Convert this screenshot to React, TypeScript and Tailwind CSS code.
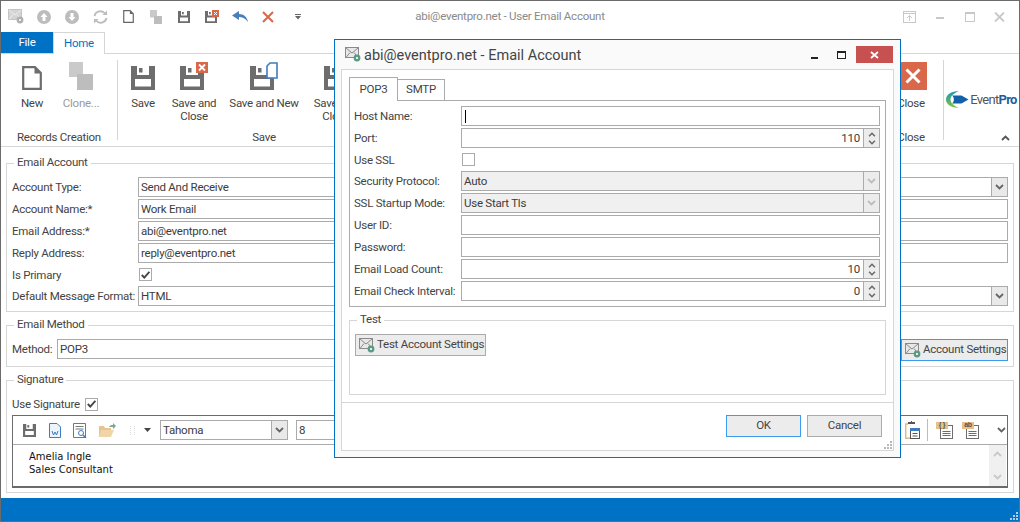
import type { ReactNode } from "react";

const labelCls = "text-[#444] whitespace-nowrap pt-[2px]";

function Disk({ size = 24, color = "#6d6d6d" }: { size?: number; color?: string }) {
	return (
		<svg width={size} height={size} viewBox="0 0 24 24" className="shrink-0">
			<path fillRule="evenodd" fill={color} d="M0 0H24V24H0ZM6 0V9H18V0ZM4 13V20.500H20V13Z" />
			<rect x="8" y="2" width="3.500" height="4.500" fill={color} />
		</svg>
	);
}

function PageIcon({ w = 20, h = 24, color = "#6d6d6d" }: { w?: number; h?: number; color?: string }) {
	return (
		<svg width={w} height={h} viewBox="0 0 20 24" className="shrink-0">
			<path d="M1.200 1.200H13L18.800 7V22.800H1.200Z" fill="white" stroke={color} strokeWidth="2.200" />
			<path d="M12.500 1.200V7.500H18.800" fill={color} />
		</svg>
	);
}

function CloneIcon({ w = 24, h = 28, color = "#bdbdbd" }: { w?: number; h?: number; color?: string }) {
	return (
		<svg width={w} height={h} viewBox="0 0 24 28" className="shrink-0">
			<rect x="0" y="0" width="14" height="15" fill={color} opacity="0.8" />
			<rect x="8" y="12" width="16" height="16" fill={color} />
		</svg>
	);
}

function MailGear({ faded = false }: { faded?: boolean }) {
	const line = faded ? "#c4c4c4" : "#8a8a8a";
	return (
		<svg width="16" height="15" viewBox="0 0 16 15" className="shrink-0">
			<rect x="0.500" y="0.500" width="13" height="10" fill={faded ? "#d4d4d4" : "#e8e8e8"} stroke={line} />
			<path d="M1 1L7 6L13 1M1 10.500L5 5.500M13 10.500L9 5.500" fill="none" stroke={faded ? "#eeeeee" : line} />
			<circle cx="12" cy="11" r="3.400" fill={faded ? "#b0b0b0" : "#5c9a86"} />
			<circle cx="12" cy="11" r="1.100" fill="white" />
		</svg>
	);
}

function Chevron({ up = false, color = "#666", w = 9, h = 6 }: { up?: boolean; color?: string; w?: number; h?: number }) {
	return (
		<svg width={w} height={h} viewBox="0 0 9 6">
			<path d={up ? "M1 5L4.500 1.500L8 5" : "M1 1L4.500 4.500L8 1"} fill="none" stroke={color} strokeWidth="1.800" />
		</svg>
	);
}

function CircleArrow({ down = false }: { down?: boolean }) {
	return (
		<svg width="14" height="14" viewBox="0 0 14 14" className="shrink-0">
			<circle cx="7" cy="7" r="7" fill="#bdbdbd" />
			<path d={down ? "M5.500 3H8.500V7H10.500L7 11L3.500 7H5.500Z" : "M5.500 11H8.500V7H10.500L7 3L3.500 7H5.500Z"} fill="white" />
		</svg>
	);
}

function Refresh() {
	return (
		<svg width="15" height="14" viewBox="0 0 15 14" className="shrink-0">
			<path d="M1.500 6A6 6 0 0 1 12 3.500M13.500 8A6 6 0 0 1 3 10.500" fill="none" stroke="#bdbdbd" strokeWidth="1.800" />
			<path d="M14 0.500V5H9.500ZM1 13.500V9H5.500Z" fill="#bdbdbd" />
		</svg>
	);
}

function RedBadge() {
	return (
		<svg width="12" height="11" viewBox="0 0 12 11" className="absolute right-0 top-0">
			<rect width="12" height="11" fill="#d9674a" />
			<path d="M3 2.500L9 8.500M9 2.500L3 8.500" stroke="white" strokeWidth="1.800" />
		</svg>
	);
}

function Combo({ text, disabled = false, className = "" }: { text: string; disabled?: boolean; className?: string }) {
	return (
		<div className={`flex h-[20px] items-stretch border border-[#ababab] ${disabled ? "bg-[#f0f0f0]" : "bg-white"} ${className}`}>
			<div className="flex flex-1 items-center overflow-hidden whitespace-nowrap pl-[2px] pt-[2px] text-[#3c3c3c]">{text}</div>
			<div className={`flex w-[16px] shrink-0 items-center justify-center border-l border-[#ababab] ${disabled ? "bg-[#ececec]" : "bg-[#e9e9e9]"}`}>
				<Chevron color={disabled ? "#bdbdbd" : "#666"} />
			</div>
		</div>
	);
}

function Input({ text = "", caret = false, className = "" }: { text?: string; caret?: boolean; className?: string }) {
	return (
		<div className={`flex h-[20px] items-center overflow-hidden whitespace-nowrap border border-[#ababab] bg-white pl-[2px] pt-[2px] text-[#3c3c3c] ${className}`}>
			{caret && <div className="ml-[1px] mb-[2px] h-[13px] w-[1px] bg-black" />}
			{text}
		</div>
	);
}

function Spin({ value }: { value: string }) {
	return (
		<div className="flex h-[20px] flex-1 items-stretch border border-[#ababab] bg-white">
			<div className="flex flex-1 items-center justify-end pr-[3px] pt-[2px] text-[#3c3c3c]">{value}</div>
			<div className="flex w-[16px] flex-col items-center justify-center gap-[3px] border-l border-[#ababab] bg-[#ececec]">
				<Chevron up w={8} h={5} />
				<Chevron w={8} h={5} />
			</div>
		</div>
	);
}

function Check({ on = false }: { on?: boolean }) {
	return (
		<div className="flex h-[13px] w-[13px] shrink-0 items-center justify-center border border-[#ababab] bg-white">
			{on && (
				<svg width="9" height="8" viewBox="0 0 9 8">
					<path d="M0.800 4L3.300 6.600L8.400 0.800" fill="none" stroke="#444" strokeWidth="1.900" />
				</svg>
			)}
		</div>
	);
}

function Row({ label, labelWidth, children }: { label: string; labelWidth: string; children: ReactNode }) {
	return (
		<div className="mb-[2px] flex h-[20px] items-center">
			<div className={`${labelWidth} ${labelCls} shrink-0`}>{label}</div>
			{children}
		</div>
	);
}

function Group({ title, className = "", children }: { title: string; className?: string; children: ReactNode }) {
	return (
		<fieldset className={`border border-[#d6d6d6] ${className}`}>
			<legend className="ml-[2px] px-[3px] pb-[2px] leading-[12px] text-[#444]">{title}</legend>
			{children}
		</fieldset>
	);
}

function RibbonBtn({ w, icon, lines, muted = false }: { w: string; icon: ReactNode; lines: string[]; muted?: boolean }) {
	return (
		<div className={`${w} flex shrink-0 flex-col items-center`}>
			<div className="flex h-[31px] items-end">{icon}</div>
			<div className={`mt-[7px] text-center leading-[13px] ${muted ? "text-[#9a9a9a]" : "text-[#444]"}`}>
				{lines.map((l) => (
					<div key={l} className="whitespace-nowrap">{l}</div>
				))}
			</div>
		</div>
	);
}

function RibbonGroup({ title, className, children }: { title: string; className: string; children: ReactNode }) {
	return (
		<div className={`flex shrink-0 flex-col ${className}`}>
			<div className="flex h-[71px] shrink-0 items-start">{children}</div>
			<div className="text-center leading-[14px] text-[#444]">{title}</div>
		</div>
	);
}

function Logo() {
	return (
		<div className="flex items-center">
			<svg width="23" height="17" viewBox="0 0 23 17" className="shrink-0">
				<defs>
					<linearGradient id="swoosh" x1="0" y1="0" x2="0" y2="1">
						<stop offset="0" stopColor="#1a9ac0" />
						<stop offset="0.55" stopColor="#4fb06a" />
						<stop offset="1" stopColor="#8cc63f" />
					</linearGradient>
				</defs>
				<path d="M13 0C5 0 0 4 0 8.500C0 13 5 17 13 17C8 15 4.500 12 4.500 8.500C4.500 5 8 2 13 0Z" fill="url(#swoosh)" />
				<path d="M6 4.500H15.500L22.500 8.500L15.500 12.500H6C8.500 10.500 8.500 6.500 6 4.500Z" fill="#1261a8" />
			</svg>
			<span className="ml-[1px] text-[13px] tracking-[-0.7px] text-[#555]">Event</span>
			<span className="text-[13px] font-bold tracking-[-0.7px] text-[#1f5da0]">Pro</span>
		</div>
	);
}

function DocTag({ tag }: { tag: string }) {
	return (
		<div className="relative h-[17px] w-[17px] shrink-0">
			<svg width="17" height="17" viewBox="0 0 17 17">
				<rect x="4.500" y="3.500" width="12" height="13" fill="white" stroke="#6d6d6d" />
				<path d="M6.500 9.500H14.500M6.500 11.500H14.500M6.500 13.500H14.500" stroke="#6d6d6d" />
				<rect width="12" height="7" fill="#e6c088" />
			</svg>
			<div className="absolute left-0 top-[-1px] w-[12px] text-center font-['Liberation_Sans',sans-serif] text-[7px] font-bold leading-[8px] text-[#555]">{tag}</div>
		</div>
	);
}

function Grip({ className, color }: { className: string; color: string }) {
	return (
		<svg width="8" height="8" viewBox="0 0 8 8" className={className}>
			<path d="M6 0h2v2H6zM3 3h2v2H3zM6 3h2v2H6zM0 6h2v2H0zM3 6h2v2H3zM6 6h2v2H6z" fill={color} />
		</svg>
	);
}

function Dialog() {
	const lw = "w-[107px]";
	return (
		<div className="absolute left-[333px] top-[38px] flex h-[419px] w-[567px] flex-col border border-[#0072c6] bg-[#fafafa]">
			<div className="flex h-[29px] shrink-0 items-center pl-[10px] pr-[7px]">
				<MailGear />
				<div className="ml-[3px] flex-1 pt-[2px] text-[14.5px] tracking-normal text-[#444]">abi@eventpro.net - Email Account</div>
				<div className="mt-[7px] h-[2px] w-[7px] bg-[#222]" />
				<div className="ml-[19px] h-[8px] w-[9px] border border-t-2 border-[#222]" />
				<div className="ml-[10px] flex h-[17px] w-[37px] items-center justify-center bg-[#c75050]">
					<svg width="9" height="8" viewBox="0 0 9 8">
						<path d="M1 1L8 7M8 1L1 7" stroke="white" strokeWidth="1.800" />
					</svg>
				</div>
			</div>
			<div className="relative mx-[6px] mb-[6px] flex-1 border border-[#d6d6d6] bg-white px-[7px] pt-[7px]">
				<div className="relative z-10 flex items-end">
					<div className="-mb-[1px] flex h-[24px] w-[49px] items-center justify-center border border-b-0 border-[#ababab] bg-white text-[#444]">POP3</div>
					<div className="flex h-[21px] w-[47px] items-center justify-center border border-b-0 border-l-0 border-[#ababab] bg-white text-[#444]">SMTP</div>
				</div>
				<div className="border border-[#ababab] pb-[3px] pl-[4px] pr-[5px] pt-[5px]">
					<Row label="Host Name:" labelWidth={lw}><Input caret className="flex-1" /></Row>
					<Row label="Port:" labelWidth={lw}><Spin value="110" /></Row>
					<div className="mb-[2px] flex h-[19px] items-center">
						<div className={`${lw} ${labelCls}`}>Use SSL</div>
						<div className="ml-[1px]"><Check /></div>
					</div>
					<Row label="Security Protocol:" labelWidth={lw}><Combo text="Auto" disabled className="flex-1" /></Row>
					<Row label="SSL Startup Mode:" labelWidth={lw}><Combo text="Use Start Tls" disabled className="flex-1" /></Row>
					<Row label="User ID:" labelWidth={lw}><Input className="flex-1" /></Row>
					<Row label="Password:" labelWidth={lw}><Input className="flex-1" /></Row>
					<Row label="Email Load Count:" labelWidth={lw}><Spin value="10" /></Row>
					<Row label="Email Check Interval:" labelWidth={lw}><Spin value="0" /></Row>
				</div>
				<Group title="Test" className="mt-[6px] h-[82px] px-[5px] pt-[7px]">
					<div className="flex h-[22px] w-[131px] items-center gap-[2px] border border-[#ababab] bg-[#ececec] pl-[3px] text-[#444]">
						<MailGear />
						<span className="whitespace-nowrap">Test Account Settings</span>
					</div>
				</Group>
				<div className="-mx-[7px] mt-[7px] flex justify-end gap-[6px] border-t border-[#d6d6d6] pr-[11px] pt-[12px]">
					<div className="flex h-[22px] w-[75px] items-center justify-center border border-[#3c9bef] bg-[#ececec] text-[#444]">OK</div>
					<div className="flex h-[22px] w-[75px] items-center justify-center border border-[#ababab] bg-[#ececec] text-[#444]">Cancel</div>
				</div>
				<Grip className="absolute bottom-[1px] right-[1px]" color="#b8b8b8" />
			</div>
		</div>
	);
}

export default function App() {
	const lw = "w-[126px]";
	const qat = "flex w-[28px] shrink-0 items-center justify-center";
	return (
		<div className="relative flex h-[522px] w-[1020px] flex-col overflow-hidden border border-[#6b6b6b] bg-white font-['Roboto',sans-serif] text-[11.5px] tracking-[-0.25px]">
			{/* title bar */}
			<div className="grid h-[31px] shrink-0 grid-cols-[1fr_auto_1fr] items-center">
				<div className="flex items-center pl-[1px]">
					<div className={qat}><MailGear faded /></div>
					<div className={qat}><CircleArrow /></div>
					<div className={qat}><CircleArrow down /></div>
					<div className={qat}><Refresh /></div>
					<div className={qat}><PageIcon w={11} h={13} color="#666" /></div>
					<div className={qat}><CloneIcon w={12} h={14} /></div>
					<div className={qat}><Disk size={12} /></div>
					<div className={qat}>
						<div className="relative h-[12px] w-[14px]">
							<Disk size={12} />
							<svg width="7" height="7" viewBox="0 0 7 7" className="absolute right-0 top-[-1px]">
								<rect width="7" height="7" fill="#d9674a" />
								<path d="M2 2L5 5M5 2L2 5" stroke="white" />
							</svg>
						</div>
					</div>
					<div className={qat}>
						<svg width="16" height="11" viewBox="0 0 16 11">
							<path d="M7 0L0 4.500L7 9V6C10 6 13 7 16 11C15 6 12 3 7 3Z" fill="#4a7ebb" />
						</svg>
					</div>
					<div className={qat}>
						<svg width="12" height="12" viewBox="0 0 12 12">
							<path d="M1 1L11 11M11 1L1 11" stroke="#d9674a" strokeWidth="2" />
						</svg>
					</div>
					<div className={`${qat} ml-[2px]`}>
						<svg width="6" height="6" viewBox="0 0 6 6">
							<path d="M0 0H6V1H0ZM0 2H6L3 5.500Z" fill="#666" />
						</svg>
					</div>
				</div>
				<div className="text-[#8a8a8a]">abi@eventpro.net - User Email Account</div>
				<div className="flex items-center justify-end pr-[14px]">
					<svg width="13" height="12" viewBox="0 0 13 12">
						<rect x="0.500" y="0.500" width="12" height="11" fill="none" stroke="#c8c8c8" />
						<path d="M1 2.500H12M6.500 10V4.500M4 7L6.500 4.500L9 7" fill="none" stroke="#c8c8c8" />
					</svg>
					<div className="ml-[20px] mt-[3px] h-[2px] w-[8px] bg-[#c8c8c8]" />
					<div className="ml-[21px] h-[10px] w-[10px] border border-t-2 border-[#c8c8c8]" />
					<svg width="11" height="10" viewBox="0 0 11 10" className="ml-[19px]">
						<path d="M1 0.500L10 9.500M10 0.500L1 9.500" stroke="#c8c8c8" strokeWidth="1.800" />
					</svg>
				</div>
			</div>

			{/* tabs */}
			<div className="flex h-[22px] shrink-0 border-b border-[#d6d6d6]">
				<div className="flex w-[52px] items-center justify-center bg-[#0072c6] text-white">File</div>
				<div className="flex h-[22px] w-[52px] items-center justify-center border-x border-t border-[#d6d6d6] bg-white text-[#0072c6]">Home</div>
			</div>

			{/* ribbon */}
			<div className="flex h-[93px] shrink-0 border-b border-[#d6d6d6]">
				<RibbonGroup title="Records Creation" className="w-[116px] pt-[5px]">
					<RibbonBtn w="w-[62px]" icon={<PageIcon />} lines={["New"]} />
					<RibbonBtn w="w-[36px]" icon={<CloneIcon />} lines={["Clone..."]} muted />
				</RibbonGroup>
				<div className="my-[6px] w-[1px] bg-[#d6d6d6]" />
				<RibbonGroup title="Save" className="w-[292px] pt-[5px]">
					<RibbonBtn w="w-[50px]" icon={<Disk />} lines={["Save"]} />
					<RibbonBtn
						w="w-[52px]"
						icon={
							<div className="relative h-[28px] w-[28px]">
								<div className="absolute bottom-0 left-0"><Disk /></div>
								<RedBadge />
							</div>
						}
						lines={["Save and", "Close"]}
					/>
					<RibbonBtn
						w="w-[88px]"
						icon={
							<div className="relative h-[28px] w-[28px]">
								<div className="absolute bottom-0 left-0"><Disk /></div>
								<svg width="12" height="17" viewBox="0 0 12 17" className="absolute right-0 top-0">
									<path d="M4 1H11V16H1V4Z" fill="white" stroke="#3f7cbf" strokeWidth="1.600" />
								</svg>
							</div>
						}
						lines={["Save and New"]}
					/>
					<RibbonBtn w="w-[56px]" icon={<Disk />} lines={["Save and", "Close"]} />
				</RibbonGroup>
				<div className="flex-1" />
				<RibbonGroup title="Close" className="w-[64px] pt-[5px]">
					<RibbonBtn
						w="w-[64px]"
						icon={
							<div className="ml-[3px] flex h-[28px] w-[28px] items-center justify-center bg-[#d9674a]">
								<svg width="16" height="16" viewBox="0 0 16 16">
									<path d="M1.500 1.500L14.500 14.500M14.500 1.500L1.500 14.500" stroke="white" strokeWidth="3" />
								</svg>
							</div>
						}
						lines={["Close"]}
					/>
				</RibbonGroup>
				<div className="my-[6px] w-[1px] bg-[#d6d6d6]" />
				<div className="flex w-[75px] shrink-0 flex-col items-center pt-[36px]">
					<Logo />
					<div className="ml-auto mr-[9px] mt-[25px]"><Chevron up color="#555" /></div>
				</div>
			</div>

			{/* form */}
			<div className="flex-1 px-[5px] pt-[9px]">
				<Group title="Email Account" className="pb-[5px] pl-[5px] pr-[5px] pt-[7px]">
					<Row label="Account Type:" labelWidth={lw}><Combo text="Send And Receive" className="flex-1" /></Row>
					<Row label="Account Name:*" labelWidth={lw}><Input text="Work Email" className="flex-1" /></Row>
					<Row label="Email Address:*" labelWidth={lw}><Input text="abi@eventpro.net" className="flex-1" /></Row>
					<Row label="Reply Address:" labelWidth={lw}><Input text="reply@eventpro.net" className="flex-1" /></Row>
					<div className="mb-[2px] flex h-[19px] items-center">
						<div className={`${lw} ${labelCls}`}>Is Primary</div>
						<div className="ml-[1px]"><Check on /></div>
					</div>
					<div className="flex h-[20px] items-center">
						<div className={`${lw} ${labelCls}`}>Default Message Format:</div>
						<Combo text="HTML" className="flex-1" />
					</div>
				</Group>
				<Group title="Email Method" className="mt-[6px] pb-[5px] pl-[5px] pr-[5px] pt-[7px]">
					<div className="flex items-start">
						<div className={`w-[45px] shrink-0 ${labelCls}`}>Method:</div>
						<Input text="POP3" className="flex-1" />
						<div className="ml-[4px] flex h-[22px] w-[107px] shrink-0 items-center gap-[2px] border border-[#3c9bef] bg-[#ececec] pl-[3px] text-[#444]">
							<MailGear />
							<span className="whitespace-nowrap">Account Settings</span>
						</div>
					</div>
				</Group>
				<Group title="Signature" className="mt-[6px] pb-[4px] pl-[5px] pr-[5px] pt-[10px]">
					<div className="flex h-[14px] items-center">
						<span className={`w-[73px] ${labelCls}`}>Use Signature</span>
						<Check on />
					</div>
					<div className="mt-[4px] h-[73px] border border-b-2 border-[#6b6b6b]">
						<div className="flex h-[29px] items-center border-b border-[#ababab]">
							<div className="ml-[10px]"><Disk size={13} /></div>
							<svg width="12" height="15" viewBox="0 0 12 15" className="ml-[13px]">
								<path d="M1 .5H8L11.500 4V14.500H.5V.5Z" fill="#eef4fb" stroke="#3f7cbf" />
								<path d="M3 8L4.500 12L6 9L7.500 12L9 8" fill="none" stroke="#3f7cbf" />
							</svg>
							<svg width="14" height="15" viewBox="0 0 14 15" className="ml-[12px]">
								<path d="M.5.5H12.500V14.500H.5Z" fill="white" stroke="#777" />
								<path d="M2.500 3.500H10.500M2.500 6H10.500" stroke="#777" />
								<circle cx="8" cy="10" r="2.500" fill="white" stroke="#3f7cbf" />
								<path d="M10 12L13 15" stroke="#3f7cbf" strokeWidth="1.400" />
							</svg>
							<svg width="17" height="14" viewBox="0 0 17 14" className="ml-[12px]">
								<path d="M0 3H5L6 5H12V14H0Z" fill="#e9c58d" />
								<path d="M2 7H15L12 14H0Z" fill="#f0d5a8" />
								<path d="M10 4C11 2 13 2 14 2V0L17 3L14 6V4C12.500 4 11 4 10 4Z" fill="#7ba88f" />
							</svg>
							<div className="ml-[14px] h-[9px] w-[5px] border-x border-dotted border-[#dddddd]" />
							<svg width="7" height="4" viewBox="0 0 7 4" className="ml-[9px]">
								<path d="M0 0H7L3.500 4Z" fill="#444" />
							</svg>
							<Combo text="Tahoma" className="ml-[9px] w-[128px]" />
							<Combo text="8" className="ml-[8px] w-[60px]" />
							<div className="flex-1" />
							<svg width="15" height="18" viewBox="0 0 15 18" className="mr-[7px]">
								<path d="M3 3H.7V17.300H5" fill="none" stroke="#e3b878" strokeWidth="1.400" />
								<path d="M3 3H10V1H7V0H6V1H3Z" fill="#555" />
								<rect x="5.500" y="7.500" width="9" height="10" fill="white" stroke="#555" />
								<rect x="5" y="7" width="10" height="3" fill="#3f7cbf" />
								<path d="M7.500 12.500H12.500M7.500 15H12.500" stroke="#555" />
							</svg>
							<div className="h-[22px] w-[1px] bg-[#bdbdbd]" />
							<div className="ml-[8px]"><DocTag tag="{ }" /></div>
							<div className="ml-[9px]"><DocTag tag="ab" /></div>
							<div className="ml-[18px] mr-[1px]"><Chevron color="#666" /></div>
						</div>
						<div className="flex h-[41px]">
							<div className="flex-1 pl-[16px] pt-[5px] font-['DejaVu_Sans',sans-serif] text-[10px] leading-[13px] tracking-normal text-[#111]">
								<div>Amelia Ingle</div>
								<div>Sales Consultant</div>
							</div>
							<div className="mr-[1px] flex w-[17px] flex-col items-center justify-between bg-[#f0f0f0] py-[6px]">
								<Chevron up color="#c8c8c8" />
								<Chevron color="#c8c8c8" />
							</div>
						</div>
					</div>
				</Group>
			</div>

			{/* status bar */}
			<div className="relative h-[23px] shrink-0 bg-[#0072c6]">
				<Grip className="absolute bottom-[1px] right-[1px]" color="#a9cfeb" />
			</div>

			<Dialog />
		</div>
	);
}
